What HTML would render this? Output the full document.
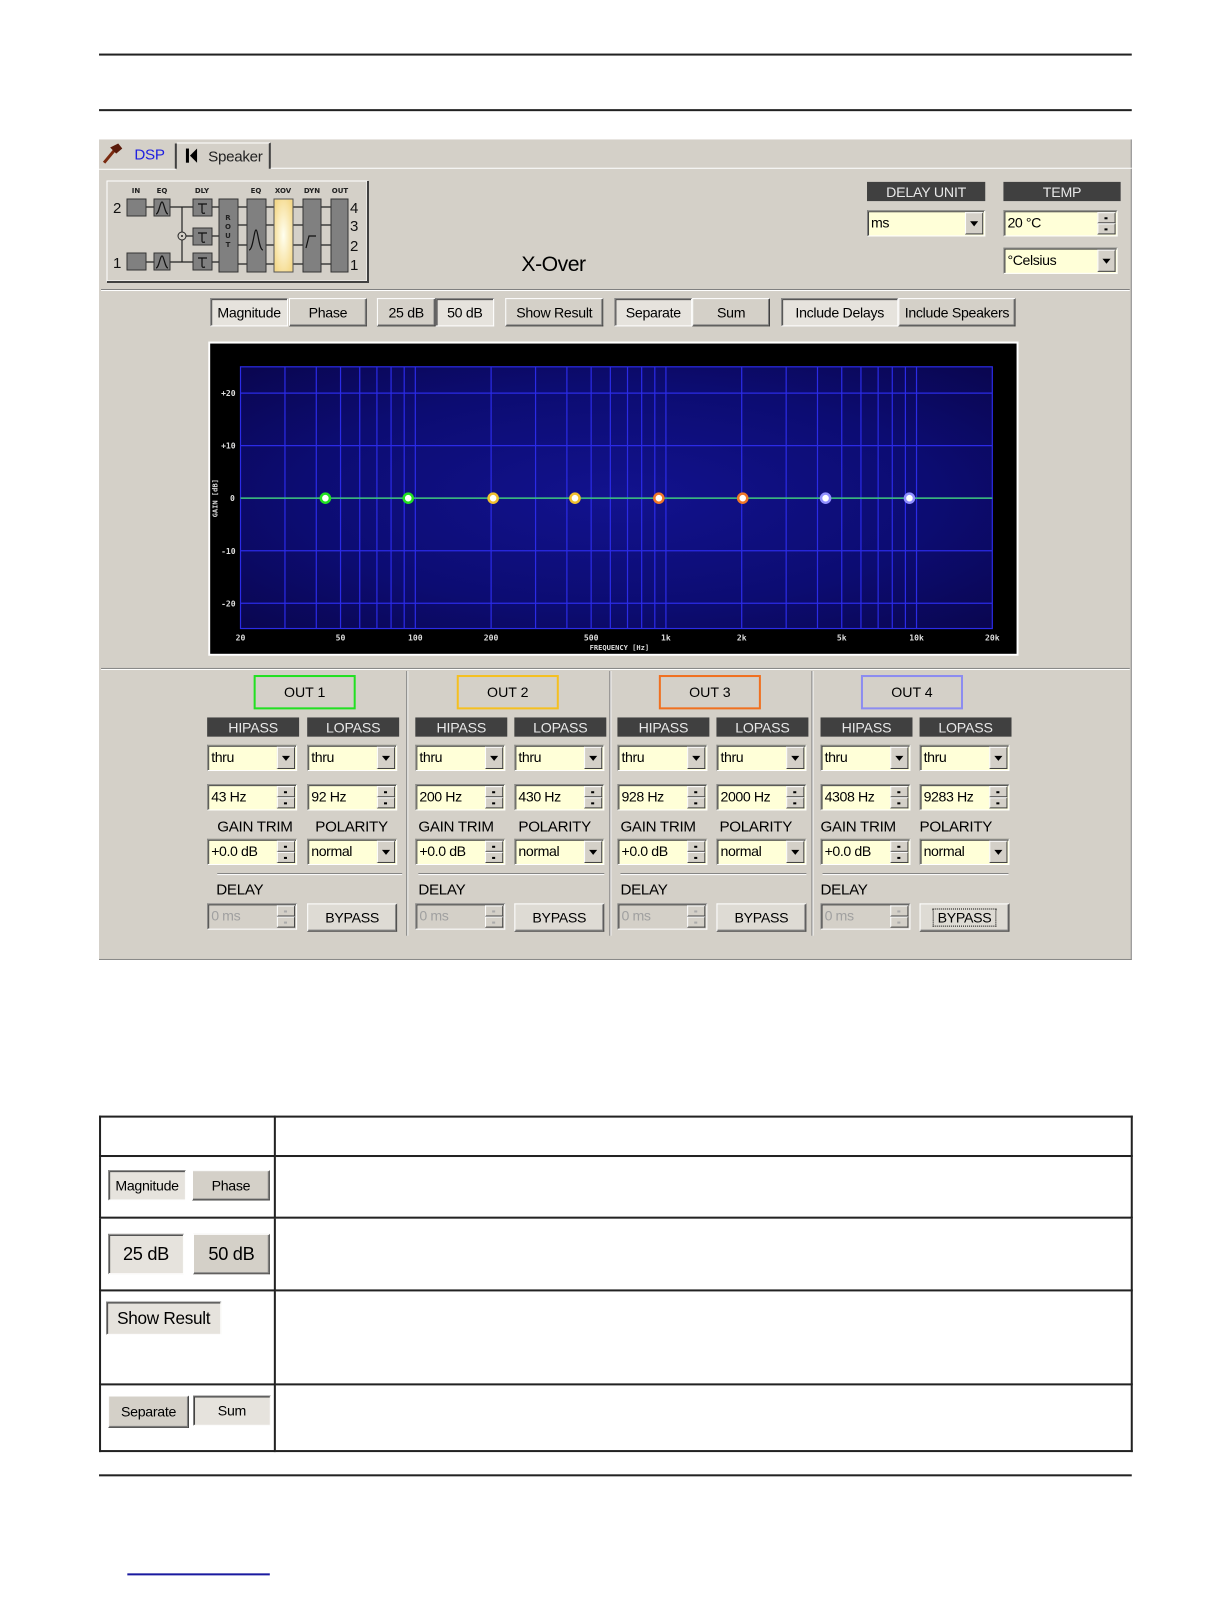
<!DOCTYPE html>
<html><head><meta charset="utf-8"><style>
*{box-sizing:border-box;margin:0;padding:0}
body{width:1224px;height:1584px;background:#fff;position:relative;overflow:hidden;font-family:"Liberation Sans",sans-serif;}
#w{position:absolute;left:0;top:0;width:1224px;height:1584px;transform:scale(1.0105);transform-origin:0 0;}
.a{position:absolute}
.rule{position:absolute;left:98px;width:1022px;height:2px;background:#222}
.panel{position:absolute;left:98px;top:138px;width:1022px;height:812px;background:#d4d0c8;border-right:1px solid #888;border-bottom:1px solid #888}
.t{position:absolute;font-size:14px;color:#000;white-space:nowrap;letter-spacing:-0.3px}
.b{position:absolute;background:#d4d0c8;border:1px solid;border-color:#fff #404040 #404040 #fff;box-shadow:inset -1px -1px #808080;font-size:14px;display:flex;align-items:center;justify-content:center;letter-spacing:-0.3px;white-space:nowrap}
.s{position:absolute;border:1px solid;border-color:#808080 #fff #fff #808080;box-shadow:inset 1px 1px #404040;background:#e6e3dd;font-size:14px;display:flex;align-items:center;justify-content:center;letter-spacing:-0.3px;white-space:nowrap}
.lab{position:absolute;background:#404040;color:#e8e8e8;font-size:14px;height:19px;display:flex;align-items:center;justify-content:center;letter-spacing:-0.2px}
.f{position:absolute;height:26px;border:1px solid;border-color:#808080 #fff #fff #808080;box-shadow:inset 1px 1px #404040;background:#ffffd8;font-size:14px;line-height:22px;padding-left:3px;letter-spacing:-0.4px}
.f .dr{position:absolute;right:1px;top:1px;width:18px;height:22px;background:#d4d0c8;border:1px solid;border-color:#fff #404040 #404040 #fff}
.f .dr:after{content:"";position:absolute;left:4px;top:8px;border-left:4px solid transparent;border-right:4px solid transparent;border-top:5px solid #000}
.f .sp{position:absolute;right:1px;top:1px;width:18px;height:22px;background:#d4d0c8}
.f .sp i{position:absolute;left:0;width:18px;height:11px;border:1px solid;border-color:#fff #404040 #404040 #fff}
.f .sp i:first-child{top:0}.f .sp i:last-child{top:11px}
.f .sp i:after{content:"";position:absolute;left:6px;top:4px;width:3px;height:2px;background:#000}
.f.dis{background:#d4d0c8;color:#a0a0a0}
.f.dis .sp i:after{background:#aaa}
.outb{position:absolute;width:101px;height:34px;border:2px solid;font-size:14px;display:flex;align-items:center;justify-content:center}
.vs{position:absolute;width:2px;top:664px;height:262px;border-left:1px solid #808080;border-right:1px solid #fff}
table{position:absolute;left:98px;top:1104px;width:1023px;border-collapse:collapse}
td{border:2px solid #222;padding:0;position:relative;vertical-align:top}
</style></head><body>
<div id="w">
<div class="rule" style="top:53px"></div>
<div class="rule" style="top:108px"></div>

<div class="panel"></div>
<!-- tabs -->
<svg class="a" style="left:100px;top:140px" width="24" height="24" viewBox="0 0 24 24"><path d="M3 21 L13 9" stroke="#7a2a10" stroke-width="3"/><path d="M9 6 L17 2 L21 7 L15 12 Z" fill="#5a1a0a"/></svg>
<div class="t" style="left:133px;top:145px;color:#2020e0;font-size:15px">DSP</div>
<div class="a" style="left:173px;top:142px;width:2px;height:25px;background:#404040"></div>
<div class="a" style="left:175px;top:141px;width:93px;height:26px;border-top:1px solid #fff;border-right:2px solid #404040"></div>
<svg class="a" style="left:183px;top:146px" width="14" height="16"><rect x="1" y="1" width="3" height="14" fill="#000"/><path d="M12 1 L5 8 L12 15 Z" fill="#000"/></svg>
<div class="t" style="left:206px;top:147px;font-size:15px;color:#222">Speaker</div>
<div class="a" style="left:268px;top:166px;width:852px;height:1px;background:#fff"></div>
<div class="a" style="left:98px;top:167px;width:76px;height:1px;background:#fff"></div>

<!-- title -->
<div class="t" style="left:516px;top:250px;font-size:21px;letter-spacing:-0.5px">X-Over</div>

<div class="lab" style="left:858px;top:180px;width:117px">DELAY UNIT</div>
<div class="lab" style="left:993px;top:180px;width:116px">TEMP</div>
<div class="f" style="left:858px;top:208px;width:117px">ms<div class="dr"></div></div>
<div class="f" style="left:993px;top:208px;width:113px">20 °C<div class="sp"><i></i><i></i></div></div>
<div class="f" style="left:993px;top:245px;width:113px">°Celsius<div class="dr"></div></div>

<div class="a" style="left:100px;top:286px;width:1018px;height:2px;border-top:1px solid #808080;border-bottom:1px solid #fff"></div>

<!-- button row -->
<div class="s" style="left:208px;top:295px;width:77px;height:28px">Magnitude</div>
<div class="b" style="left:286px;top:295px;width:77px;height:28px">Phase</div>
<div class="b" style="left:373px;top:295px;width:58px;height:28px">25 dB</div>
<div class="s" style="left:431px;top:295px;width:58px;height:28px">50 dB</div>
<div class="b" style="left:500px;top:295px;width:97px;height:28px">Show Result</div>
<div class="s" style="left:608px;top:295px;width:77px;height:28px">Separate</div>
<div class="b" style="left:685px;top:295px;width:77px;height:28px">Sum</div>
<div class="s" style="left:773px;top:295px;width:116px;height:28px">Include Delays</div>
<div class="b" style="left:889px;top:295px;width:116px;height:28px">Include Speakers</div>

<!-- graph -->
<svg class="a" style="left:206px;top:338px" width="802" height="311" viewBox="206 338 802 311">
<defs><radialGradient id="g" cx="0.5" cy="0.5" r="0.7"><stop offset="0" stop-color="#12128e"/><stop offset="0.6" stop-color="#0c0c72"/><stop offset="1" stop-color="#0a0650"/></radialGradient></defs>
<rect x="206" y="338" width="802" height="311" fill="#fff"/>
<rect x="208" y="340" width="798" height="307" fill="#000"/>
<rect x="238" y="363" width="744" height="259" fill="url(#g)"/>
<g stroke="#2b2be6" stroke-width="1.2" fill="none">
<rect x="238" y="363" width="744" height="259"/>
<path d="M238 389H982M238 441H982M238 493H982M238 545H982M238 597H982"/>
<path d="M282 363V622M313 363V622M337 363V622M356 363V622M373 363V622M387 363V622M400 363V622M411 363V622M486 363V622M530 363V622M561 363V622M585 363V622M604 363V622M621 363V622M635 363V622M648 363V622M659 363V622M734 363V622M778 363V622M809 363V622M833 363V622M852 363V622M869 363V622M883 363V622M896 363V622M907 363V622"/>
</g>
<line x1="238" y1="493" x2="982" y2="493" stroke="#3ec87a" stroke-width="1.5"/>
<g stroke-width="2.5">
<circle cx="322" cy="493" r="4.5" fill="#fff" stroke="#22e022"/>
<circle cx="404" cy="493" r="4.5" fill="#fff" stroke="#22e022"/>
<circle cx="488" cy="493" r="4.5" fill="#fff" stroke="#f0c030"/>
<circle cx="569" cy="493" r="4.5" fill="#fff" stroke="#f0c030"/>
<circle cx="652" cy="493" r="4.5" fill="#fff" stroke="#f07828"/>
<circle cx="735" cy="493" r="4.5" fill="#fff" stroke="#f07828"/>
<circle cx="817" cy="493" r="4.5" fill="#fff" stroke="#9090ff"/>
<circle cx="900" cy="493" r="4.5" fill="#fff" stroke="#9090ff"/>
</g>
<g fill="#ddd" font-family="DejaVu Sans Mono,monospace" font-size="8" font-weight="bold" text-anchor="middle">
<text x="226" y="392">+20</text><text x="226" y="444">+10</text><text x="230" y="496">0</text><text x="226" y="548">-10</text><text x="226" y="600">-20</text>
<text x="238" y="634">20</text><text x="337" y="634">50</text><text x="411" y="634">100</text><text x="486" y="634">200</text><text x="585" y="634">500</text><text x="659" y="634">1k</text><text x="734" y="634">2k</text><text x="833" y="634">5k</text><text x="907" y="634">10k</text><text x="982" y="634">20k</text>
<text x="613" y="643" font-size="7">FREQUENCY [Hz]</text>
<text x="215" y="493" font-size="7" transform="rotate(-90 215 493)">GAIN [dB]</text>
</g>
</svg>

<div class="a" style="left:100px;top:661px;width:1018px;height:2px;border-top:1px solid #808080;border-bottom:1px solid #fff"></div>
<div class="vs" style="left:402px"></div>
<div class="vs" style="left:603px"></div>
<div class="vs" style="left:803px"></div>

<!-- channel columns -->
<div class="outb" style="left:251px;top:668px;border-color:#22e022">OUT 1</div>
<div class="outb" style="left:452px;top:668px;border-color:#f5c021">OUT 2</div>
<div class="outb" style="left:652px;top:668px;border-color:#f07020">OUT 3</div>
<div class="outb" style="left:852px;top:668px;border-color:#8c8cf0">OUT 4</div>

<!-- col1 -->
<div class="lab" style="left:205px;top:710px;width:91px">HIPASS</div>
<div class="lab" style="left:304px;top:710px;width:91px">LOPASS</div>
<div class="f" style="left:205px;top:737px;width:89px">thru<div class="dr"></div></div>
<div class="f" style="left:304px;top:737px;width:89px">thru<div class="dr"></div></div>
<div class="f" style="left:205px;top:776px;width:89px">43 Hz<div class="sp"><i></i><i></i></div></div>
<div class="f" style="left:304px;top:776px;width:89px">92 Hz<div class="sp"><i></i><i></i></div></div>
<div class="t" style="left:215px;top:810px;font-size:15px">GAIN TRIM</div>
<div class="t" style="left:312px;top:810px;font-size:15px">POLARITY</div>
<div class="f" style="left:205px;top:830px;width:89px">+0.0 dB<div class="sp"><i></i><i></i></div></div>
<div class="f" style="left:304px;top:830px;width:89px">normal<div class="dr"></div></div>
<div class="a" style="left:215px;top:864px;width:183px;height:2px;border-top:1px solid #808080;border-bottom:1px solid #fff"></div>
<div class="t" style="left:214px;top:872px;font-size:15px">DELAY</div>
<div class="f dis" style="left:205px;top:894px;width:89px">0 ms<div class="sp"><i></i><i></i></div></div>
<div class="b" style="left:304px;top:894px;width:89px;height:28px;background:#dedbd4">BYPASS</div>

<!-- col2 -->
<div class="lab" style="left:411px;top:710px;width:91px">HIPASS</div>
<div class="lab" style="left:509px;top:710px;width:91px">LOPASS</div>
<div class="f" style="left:411px;top:737px;width:89px">thru<div class="dr"></div></div>
<div class="f" style="left:509px;top:737px;width:89px">thru<div class="dr"></div></div>
<div class="f" style="left:411px;top:776px;width:89px">200 Hz<div class="sp"><i></i><i></i></div></div>
<div class="f" style="left:509px;top:776px;width:89px">430 Hz<div class="sp"><i></i><i></i></div></div>
<div class="t" style="left:414px;top:810px;font-size:15px">GAIN TRIM</div>
<div class="t" style="left:513px;top:810px;font-size:15px">POLARITY</div>
<div class="f" style="left:411px;top:830px;width:89px">+0.0 dB<div class="sp"><i></i><i></i></div></div>
<div class="f" style="left:509px;top:830px;width:89px">normal<div class="dr"></div></div>
<div class="a" style="left:414px;top:864px;width:184px;height:2px;border-top:1px solid #808080;border-bottom:1px solid #fff"></div>
<div class="t" style="left:414px;top:872px;font-size:15px">DELAY</div>
<div class="f dis" style="left:411px;top:894px;width:89px">0 ms<div class="sp"><i></i><i></i></div></div>
<div class="b" style="left:509px;top:894px;width:89px;height:28px;background:#dedbd4">BYPASS</div>

<!-- col3 -->
<div class="lab" style="left:611px;top:710px;width:91px">HIPASS</div>
<div class="lab" style="left:709px;top:710px;width:91px">LOPASS</div>
<div class="f" style="left:611px;top:737px;width:89px">thru<div class="dr"></div></div>
<div class="f" style="left:709px;top:737px;width:89px">thru<div class="dr"></div></div>
<div class="f" style="left:611px;top:776px;width:89px">928 Hz<div class="sp"><i></i><i></i></div></div>
<div class="f" style="left:709px;top:776px;width:89px">2000 Hz<div class="sp"><i></i><i></i></div></div>
<div class="t" style="left:614px;top:810px;font-size:15px">GAIN TRIM</div>
<div class="t" style="left:712px;top:810px;font-size:15px">POLARITY</div>
<div class="f" style="left:611px;top:830px;width:89px">+0.0 dB<div class="sp"><i></i><i></i></div></div>
<div class="f" style="left:709px;top:830px;width:89px">normal<div class="dr"></div></div>
<div class="a" style="left:614px;top:864px;width:184px;height:2px;border-top:1px solid #808080;border-bottom:1px solid #fff"></div>
<div class="t" style="left:614px;top:872px;font-size:15px">DELAY</div>
<div class="f dis" style="left:611px;top:894px;width:89px">0 ms<div class="sp"><i></i><i></i></div></div>
<div class="b" style="left:709px;top:894px;width:89px;height:28px;background:#dedbd4">BYPASS</div>

<!-- col4 -->
<div class="lab" style="left:812px;top:710px;width:91px">HIPASS</div>
<div class="lab" style="left:910px;top:710px;width:91px">LOPASS</div>
<div class="f" style="left:812px;top:737px;width:89px">thru<div class="dr"></div></div>
<div class="f" style="left:910px;top:737px;width:89px">thru<div class="dr"></div></div>
<div class="f" style="left:812px;top:776px;width:89px">4308 Hz<div class="sp"><i></i><i></i></div></div>
<div class="f" style="left:910px;top:776px;width:89px">9283 Hz<div class="sp"><i></i><i></i></div></div>
<div class="t" style="left:812px;top:810px;font-size:15px">GAIN TRIM</div>
<div class="t" style="left:910px;top:810px;font-size:15px">POLARITY</div>
<div class="f" style="left:812px;top:830px;width:89px">+0.0 dB<div class="sp"><i></i><i></i></div></div>
<div class="f" style="left:910px;top:830px;width:89px">normal<div class="dr"></div></div>
<div class="a" style="left:814px;top:864px;width:184px;height:2px;border-top:1px solid #808080;border-bottom:1px solid #fff"></div>
<div class="t" style="left:812px;top:872px;font-size:15px">DELAY</div>
<div class="f dis" style="left:812px;top:894px;width:89px">0 ms<div class="sp"><i></i><i></i></div></div>
<div class="b" style="left:910px;top:894px;width:89px;height:28px;background:#dedbd4"><span style="border:1px dotted #000;padding:0 4px">BYPASS</span></div>

<!-- table -->
<table>
<tr style="height:39px"><td style="width:173px"></td><td></td></tr>
<tr style="height:61px"><td><div class="s" style="left:7px;top:13px;width:77px;height:30px">Magnitude</div><div class="b" style="left:90px;top:13px;width:77px;height:30px">Phase</div></td><td></td></tr>
<tr style="height:72px"><td><div class="s" style="left:7px;top:15px;width:75px;height:40px;font-size:18px">25 dB</div><div class="b" style="left:91px;top:15px;width:76px;height:40px;font-size:18px">50 dB</div></td><td></td></tr>
<tr style="height:93px"><td><div class="s" style="left:5px;top:10px;width:114px;height:33px;font-size:17px">Show Result</div></td><td></td></tr>
<tr style="height:66px"><td><div class="b" style="left:7px;top:10px;width:80px;height:32px">Separate</div><div class="s" style="left:91px;top:10px;width:77px;height:30px">Sum</div></td><td></td></tr>
</table>

<div class="rule" style="top:1459px"></div>
<div class="a" style="left:126px;top:1557px;width:141px;height:2px;background:#1a1aa0"></div>
</div>

<!-- block diagram (actual coords) -->
<svg class="a" style="left:106px;top:180px" width="264" height="104" viewBox="106 180 264 104">
<rect x="107" y="181" width="260" height="100" fill="#d4d0c8" stroke="#fff"/>
<path d="M368 181V282H107" stroke="#404040" stroke-width="2" fill="none"/>
<g stroke="#222" stroke-width="1.2" fill="none">
<path d="M146 207H154M146 262H154M170 207H193M170 262H193M182 207V262M182 236H193M212 207H219M212 236H219M212 262H219"/>
<path d="M238 207H247M238 225H247M238 245H247M238 264H247M266 207H274M266 225H274M266 245H274M266 264H274M293 207H303M293 225H303M293 245H303M293 264H303M321 207H331M321 225H331M321 245H331M321 264H331"/>
</g>
<circle cx="182" cy="236" r="4" fill="#d4d0c8" stroke="#222"/><circle cx="182" cy="236" r="1" fill="#222"/>
<g fill="#808080" stroke="#333">
<rect x="127" y="199" width="19" height="17"/><rect x="127" y="253" width="19" height="17"/>
<rect x="154" y="199" width="16" height="17"/><rect x="154" y="253" width="16" height="17"/>
<rect x="193" y="199" width="19" height="17"/><rect x="193" y="228" width="19" height="17"/><rect x="193" y="253" width="19" height="17"/>
<rect x="219" y="199" width="19" height="73"/><rect x="247" y="199" width="19" height="73"/>
<rect x="303" y="199" width="18" height="73"/><rect x="331" y="199" width="17" height="73"/>
</g>
<defs><radialGradient id="y" cx="0.5" cy="0.5" r="0.6"><stop offset="0" stop-color="#fffff0"/><stop offset="1" stop-color="#f5d98a"/></radialGradient></defs>
<rect x="274" y="199" width="19" height="73" fill="url(#y)" stroke="#555"/>
<g stroke="#111" stroke-width="1.2" fill="none">
<path d="M156 214C159 214 160 202 162 202C164 202 165 214 168 214M156 268C159 268 160 256 162 256C164 256 165 268 168 268M249 250C253 250 254 230 256 230C258 230 259 250 263 250M306 248L309 236H316"/>
<path d="M198 204H207M202 204V212Q202 214 205 213M198 233H207M202 233V241Q202 243 205 242M198 258H207M202 258V266Q202 268 205 267"/>
</g>
<g font-family="DejaVu Sans,sans-serif" font-size="7" font-weight="bold" fill="#222" text-anchor="middle">
<text x="136" y="193">IN</text><text x="162" y="193">EQ</text><text x="202" y="193">DLY</text><text x="256" y="193">EQ</text><text x="283" y="193">XOV</text><text x="312" y="193">DYN</text><text x="340" y="193">OUT</text>
<text x="228" y="220">R</text><text x="228" y="229">O</text><text x="228" y="238">U</text><text x="228" y="247">T</text>
</g>
<g font-family="Liberation Sans,sans-serif" font-size="15" fill="#111">
<text x="113" y="213">2</text><text x="113" y="268">1</text>
<text x="350" y="213">4</text><text x="350" y="231">3</text><text x="350" y="251">2</text><text x="350" y="270">1</text>
</g>
</svg>
</body></html>
